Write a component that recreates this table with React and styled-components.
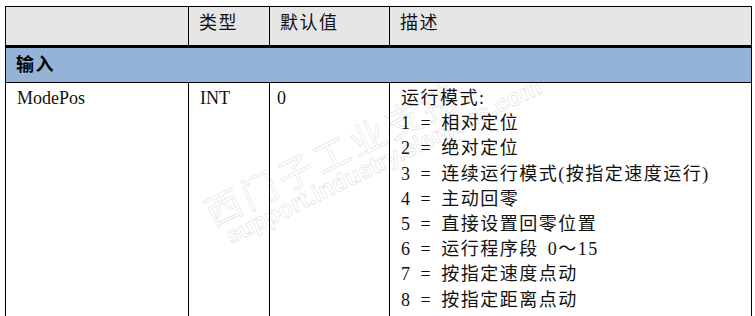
import React from 'react';
import styled, { createGlobalStyle } from 'styled-components';

const GlobalStyle = createGlobalStyle`
  html, body {
    margin: 0;
    padding: 0;
    background: #ffffff;
    overflow: hidden;
  }
  body {
    font-family: 'Liberation Serif', 'Noto Sans CJK SC', serif;
    color: #111;
  }
`;

const Page = styled.div`
  position: relative;
  padding: 6px 0 0 5px;
`;

const Table = styled.div`
  display: grid;
  grid-template-columns: 183px 81px 120px 362px;
  width: 747px;
  box-sizing: border-box;
  border-left: 1px solid #000;
  border-top: 1px solid #000;
`;

const HeadCell = styled.div`
  box-sizing: border-box;
  height: 41px;
  padding: 4px 8px 0 10px;
  background: #e6e6e6;
  border-right: 1px solid #000;
  border-bottom: 3px solid #000;
  font-size: 18px;
  line-height: 25px;
  letter-spacing: 1.5px;
`;

const SectionRow = styled.div`
  grid-column: 1 / -1;
  box-sizing: border-box;
  height: 35px;
  padding: 5px 10px 0 10px;
  background: #95b3d7;
  border-right: 1px solid #000;
  border-bottom: 1px solid #000;
  font-size: 18px;
  font-weight: 700;
  line-height: 25px;
  letter-spacing: 1.5px;
  color: #000;
`;

const Cell = styled.div`
  box-sizing: border-box;
  padding: 3px 8px 24px ${(props) => props.indent || 11}px;
  border-right: 1px solid #000;
  font-size: 18px;
  line-height: 25.2px;
`;

const Line = styled.div`
  letter-spacing: 1.5px;
  word-spacing: 3px;
  white-space: pre;
`;

const Watermark = styled.div`
  position: absolute;
  left: 198px;
  top: 196px;
  transform: rotate(-26deg);
  transform-origin: 0 0;
  pointer-events: none;
  color: transparent;
  -webkit-text-stroke: 1px rgba(0, 0, 0, 0.11);
  white-space: nowrap;
`;

const MarkCn = styled.div`
  font-family: 'Noto Sans CJK SC', sans-serif;
  font-size: 36px;
  line-height: 38px;
  letter-spacing: 4px;
`;

const MarkUrl = styled.div`
  font-family: 'Liberation Sans', sans-serif;
  font-weight: 700;
  font-size: 24px;
  line-height: 24px;
  padding-left: 8px;
`;

const modes = [
  '运行模式:',
  '1 = 相对定位',
  '2 = 绝对定位',
  '3 = 连续运行模式(按指定速度运行)',
  '4 = 主动回零',
  '5 = 直接设置回零位置',
  '6 = 运行程序段 0～15',
  '7 = 按指定速度点动',
  '8 = 按指定距离点动',
];

const App = () => {
  return (
    <Page>
      <GlobalStyle />
      <Table>
        <HeadCell />
        <HeadCell>类型</HeadCell>
        <HeadCell>默认值</HeadCell>
        <HeadCell>描述</HeadCell>

        <SectionRow>输入</SectionRow>

        <Cell>ModePos</Cell>
        <Cell>INT</Cell>
        <Cell indent={7}>0</Cell>
        <Cell>
          {modes.map((m) => (
            <Line key={m}>{m}</Line>
          ))}
        </Cell>
      </Table>
      <Watermark>
        <MarkCn>西门子工业支持</MarkCn>
        <MarkUrl>support.industry.siemens.com</MarkUrl>
      </Watermark>
    </Page>
  );
};

export default App;
